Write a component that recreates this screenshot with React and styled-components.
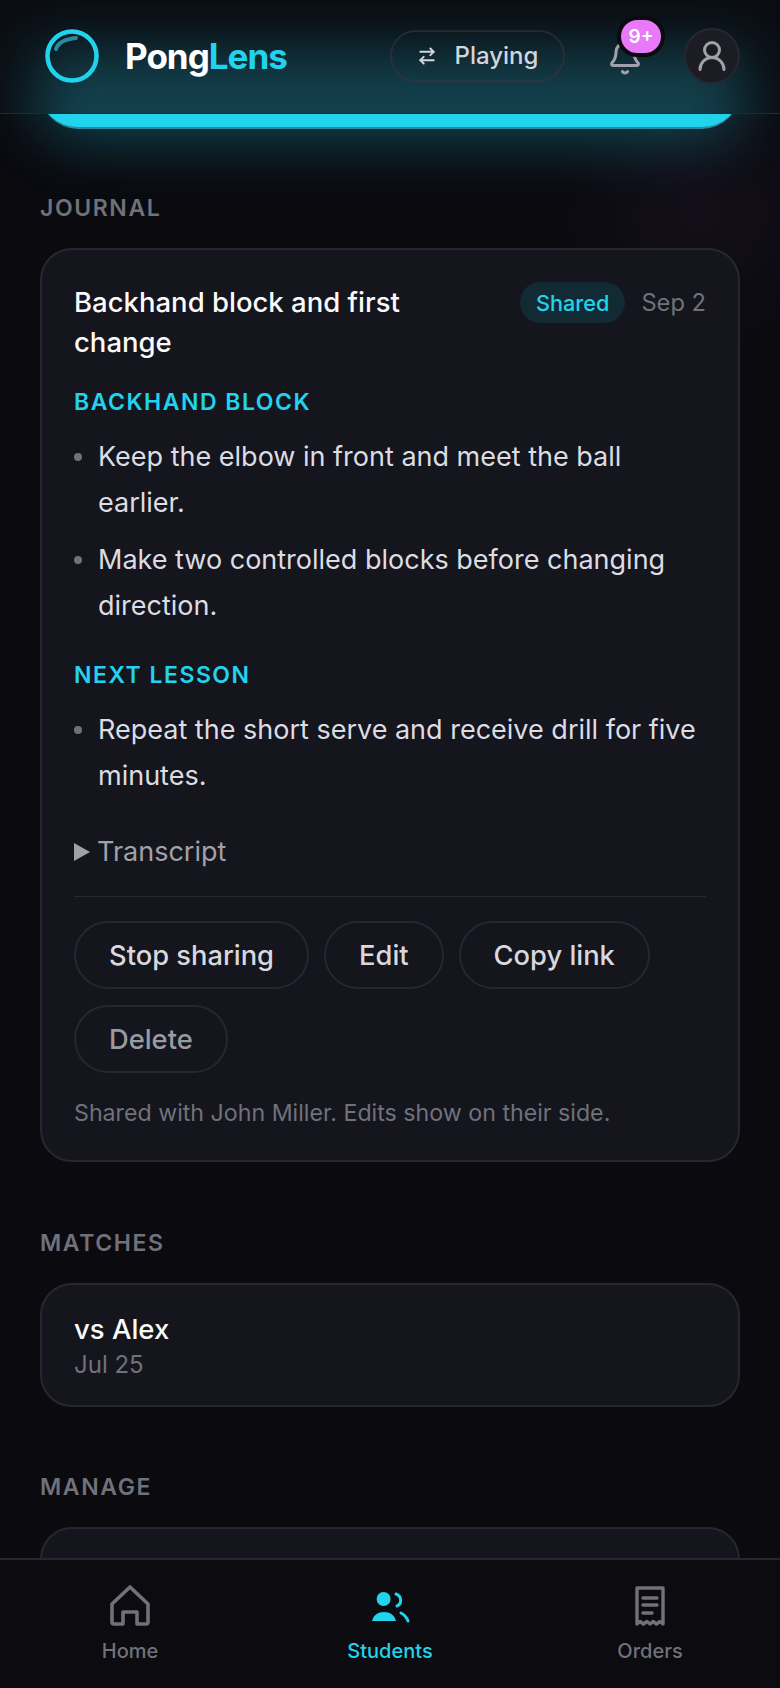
import React from 'react';
import styled, { createGlobalStyle } from 'styled-components';
import { ArrowRightLeft, Bell, UserRound } from 'lucide-react';

const cyan = '#22d3ee';
const pink = '#e879f9';
const line = '#272730';
const muted = '#71717a';

const Global = createGlobalStyle`
  html, body { margin: 0; padding: 0; background: #0a0a0f; }
  * { box-sizing: border-box; }
  body { font-family: Inter, "Liberation Sans", sans-serif; -webkit-font-smoothing: antialiased; }
`;

const Page = styled.div`
  width: 780px;
  height: 1688px;
  display: flex;
  flex-direction: column;
  overflow: hidden;
  background:
    radial-gradient(circle at 700px 210px, rgba(232, 121, 249, 0.045), transparent 150px),
    #0a0a0f;
`;

const Header = styled.header`
  position: relative;
  z-index: 2;
  isolation: isolate;
  overflow: hidden;
  height: 114px;
  flex: none;
  display: flex;
  align-items: center;
  padding: 0 40px 2px 45px;
  background: #0a0d12;
  border-bottom: 1px solid ${line};
  /* the button scrolled under the bar, seen through its blur */
  &::before {
    content: '';
    position: absolute;
    z-index: -1;
    left: 36px;
    right: 36px;
    top: 50px;
    height: 120px;
    background: #13404c;
    filter: blur(28px);
  }
`;

const Logo = styled.svg`
  width: 54px;
  height: 54px;
  flex: none;
`;

const Brand = styled.div`
  margin-left: 26px;
  font-size: 35px;
  font-weight: 700;
  letter-spacing: -1px;
  color: #fff;
  & span { color: ${cyan}; }
`;

const ModePill = styled.button`
  margin-left: auto;
  height: 52px;
  width: 175px;
  display: flex;
  align-items: center;
  justify-content: center;
  gap: 18px;
  border: 2px solid rgba(62, 50, 66, 0.55);
  border-radius: 26px;
  background: transparent;
  color: #d4d4dc;
  font: 500 24px Inter, sans-serif;
`;

const BellWrap = styled.div`
  position: relative;
  width: 36px;
  height: 36px;
  margin: 0 0 0 42px;
  top: 2px;
  color: #a1a1aa;
`;

const Badge = styled.span`
  position: absolute;
  top: -24px;
  left: 10px;
  width: 48px;
  height: 41px;
  display: flex;
  align-items: center;
  justify-content: center;
  border-radius: 21px;
  background: ${pink};
  border: 4px solid #0a0a0f;
  color: #fff;
  font-size: 19px;
  font-weight: 600;
`;

const Avatar = styled.div`
  width: 56px;
  height: 56px;
  margin-left: 41px;
  border-radius: 50%;
  display: flex;
  align-items: center;
  justify-content: center;
  background: #1c1c24;
  border: 2px solid ${line};
  color: #a1a1aa;
`;

const Main = styled.main`
  flex: 1;
  min-height: 0;
  padding: 0 40px;
`;

const PrimaryEdge = styled.div`
  height: 92px;
  margin-top: -77px;
  border-radius: 0 0 38px 38px;
  background: ${cyan};
  border-bottom: 2px solid #2a8ba0;
  box-shadow: 0 8px 64px rgba(34, 211, 238, 0.32);
`;

const SectionLabel = styled.h2`
  margin: ${p => p.$top}px 0 26px;
  font-size: 23px;
  line-height: 28px;
  font-weight: 600;
  letter-spacing: 1.6px;
  color: ${muted};
`;

const Card = styled.section`
  background: #14151d;
  border: 2px solid ${line};
  border-radius: 32px;
  padding: ${p => p.$pad || '32px 32px 32px'};
`;

const ManageCard = styled(Card)`
  height: 200px;
`;

const CardHead = styled.div`
  display: flex;
  align-items: flex-start;
  justify-content: space-between;
`;

const EntryTitle = styled.h3`
  margin: 0;
  width: 350px;
  font-size: 27.5px;
  line-height: 40px;
  font-weight: 500;
  color: #fafafa;
`;

const HeadMeta = styled.div`
  display: flex;
  align-items: center;
  gap: 16px;
`;

const SharedTag = styled.span`
  height: 41px;
  padding: 0 16px;
  display: flex;
  align-items: center;
  border-radius: 21px;
  background: #122a34;
  color: ${cyan};
  font-size: 21.7px;
  font-weight: 500;
`;

const DateText = styled.span`
  font-size: 23.7px;
  color: ${muted};
`;

const Subhead = styled.h4`
  margin: ${p => p.$top}px 0 17px;
  font-size: 23px;
  line-height: 30px;
  font-weight: 600;
  letter-spacing: 1.5px;
  color: ${cyan};
`;

const Notes = styled.ul`
  margin: 0;
  padding: 0;
  list-style: none;
`;

const Note = styled.li`
  position: relative;
  padding-left: 24px;
  margin-bottom: 11px;
  font-size: 27px;
  line-height: 46px;
  color: #dcdce2;
  &::before {
    content: '';
    position: absolute;
    left: 0;
    top: 19px;
    width: 8px;
    height: 8px;
    border-radius: 50%;
    background: ${muted};
  }
`;

const Transcript = styled.div`
  margin-top: 36px;
  padding-bottom: 27px;
  display: flex;
  align-items: center;
  gap: 7px;
  font-size: 27px;
  line-height: 34px;
  color: #a1a1aa;
  border-bottom: 1px solid ${line};
  &::before {
    content: '';
    width: 0;
    height: 0;
    border-left: 16px solid #a1a1aa;
    border-top: 9px solid transparent;
    border-bottom: 9px solid transparent;
  }
`;

const Actions = styled.div`
  margin-top: 24px;
  display: flex;
  flex-wrap: wrap;
  gap: 16px 15px;
`;

const ActionButton = styled.button`
  height: 68px;
  padding: 0 33px;
  border: 2px solid ${line};
  border-radius: 34px;
  background: transparent;
  color: ${p => (p.$muted ? '#9a9aa3' : '#d8d8dd')};
  font: 500 27.3px Inter, sans-serif;
`;

const Footnote = styled.p`
  margin: 25px 0 0;
  font-size: 23.2px;
  line-height: 30px;
  color: ${muted};
`;

const MatchTitle = styled.div`
  font-size: 27.5px;
  line-height: 36px;
  font-weight: 500;
  color: #fafafa;
`;

const MatchDate = styled.div`
  margin-top: 3px;
  font-size: 24px;
  line-height: 30px;
  color: ${muted};
`;

const BottomNav = styled.nav`
  position: relative;
  z-index: 2;
  height: 130px;
  flex: none;
  display: grid;
  grid-template-columns: repeat(3, 1fr);
  padding: 24px 0 0;
  background: #0b0b10;
  border-top: 2px solid ${line};
`;

const NavItem = styled.a`
  display: flex;
  flex-direction: column;
  align-items: center;
  gap: 8px;
  font-size: 20px;
  line-height: 26px;
  font-weight: 500;
  color: ${p => (p.$active ? cyan : muted)};
`;

const NavIcon = styled.svg`
  width: 46px;
  height: 46px;
`;

function LogoMark() {
  return (
    <Logo viewBox="0 0 54 54" fill="none">
      <circle cx="27" cy="27" r="24.5" stroke={cyan} strokeWidth="4.5" />
      <path d="M11 20 C13 14 20 10 31 9" stroke="#2a8ba0" strokeWidth="4" strokeLinecap="round" />
    </Logo>
  );
}

function HomeIcon() {
  return (
    <NavIcon viewBox="0 0 46 46" fill="none" stroke={muted} strokeWidth="3.6" strokeLinejoin="round">
      <path d="M23 3 L41 20 V38 Q41 40 39 40 H30 V28 H16 V40 H7 Q5 40 5 38 V20 Z" />
    </NavIcon>
  );
}

function StudentsIcon() {
  return (
    <NavIcon viewBox="0 0 46 46" fill={cyan}>
      <circle cx="16.6" cy="15" r="7" />
      <path d="M5 37 C6.5 31 11 28 17 28 C23 28 27.5 31 29 37 Z" />
      <path d="M29 10 C35 12 35 20 30 22" fill="none" stroke={cyan} strokeWidth="3" strokeLinecap="round" />
      <path d="M34 29 C38 31 40 34 41 37" fill="none" stroke={cyan} strokeWidth="3" strokeLinecap="round" />
    </NavIcon>
  );
}

function OrdersIcon() {
  return (
    <NavIcon viewBox="0 0 46 46" fill="none" stroke={muted} strokeWidth="3.4" strokeLinejoin="round">
      <path d="M10 4 H36 V40 L33 37.5 L29.5 40 L26 37.5 L23 40 L20 37.5 L16.5 40 L13 37.5 L10 40 Z" />
      <path d="M16 14 H30 M16 21 H30 M16 29 H25" strokeLinecap="round" />
    </NavIcon>
  );
}

export default function App() {
  return (
    <Page>
      <Global />
      <Header>
        <LogoMark />
        <Brand>Pong<span>Lens</span></Brand>
        <ModePill><ArrowRightLeft size={20} strokeWidth={2.4} />Playing</ModePill>
        <BellWrap>
          <Bell size={36} strokeWidth={2} />
          <Badge>9+</Badge>
        </BellWrap>
        <Avatar><UserRound size={36} strokeWidth={2} /></Avatar>
      </Header>
      <Main>
        <PrimaryEdge />
        <SectionLabel $top={65}>JOURNAL</SectionLabel>
        <Card>
          <CardHead>
            <EntryTitle>Backhand block and first change</EntryTitle>
            <HeadMeta>
              <SharedTag>Shared</SharedTag>
              <DateText>Sep 2</DateText>
            </HeadMeta>
          </CardHead>
          <Subhead $top={25}>BACKHAND BLOCK</Subhead>
          <Notes>
            <Note>Keep the elbow in front and meet the ball earlier.</Note>
            <Note>Make two controlled blocks before changing direction.</Note>
          </Notes>
          <Subhead $top={31}>NEXT LESSON</Subhead>
          <Notes>
            <Note>Repeat the short serve and receive drill for five minutes.</Note>
          </Notes>
          <Transcript>Transcript</Transcript>
          <Actions>
            <ActionButton>Stop sharing</ActionButton>
            <ActionButton>Edit</ActionButton>
            <ActionButton>Copy link</ActionButton>
            <ActionButton $muted>Delete</ActionButton>
          </Actions>
          <Footnote>Shared with John Miller. Edits show on their side.</Footnote>
        </Card>
        <SectionLabel $top={67}>MATCHES</SectionLabel>
        <Card $pad="26px 32px 25px">
          <MatchTitle>vs Alex</MatchTitle>
          <MatchDate>Jul 25</MatchDate>
        </Card>
        <SectionLabel $top={66}>MANAGE</SectionLabel>
        <ManageCard />
      </Main>
      <BottomNav>
        <NavItem>
          <HomeIcon />
          Home
        </NavItem>
        <NavItem $active>
          <StudentsIcon />
          Students
        </NavItem>
        <NavItem>
          <OrdersIcon />
          Orders
        </NavItem>
      </BottomNav>
    </Page>
  );
}
